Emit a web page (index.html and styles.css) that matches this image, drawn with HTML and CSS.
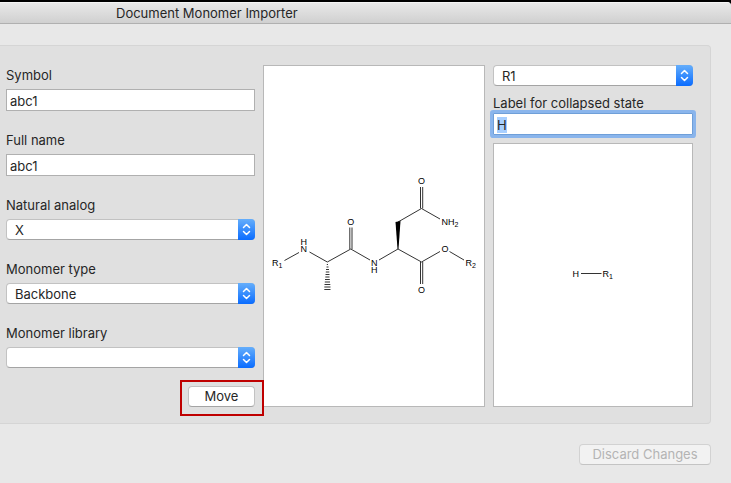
FILE: index.html
```html
<!DOCTYPE html>
<html lang="en">
<head>
<meta charset="utf-8">
<title>Document Monomer Importer</title>
<link rel="stylesheet" href="styles.css">
</head>
<body>
<main class="window">
  <header class="titlebar"><h1>Document Monomer Importer</h1></header>
  <section class="panel">
    <form class="fields">
      <div class="field">
        <label for="symbol">Symbol</label>
        <input id="symbol" class="text" type="text" value="abc1">
      </div>
      <div class="field">
        <label for="fullname">Full name</label>
        <input id="fullname" class="text" type="text" value="abc1">
      </div>
      <div class="field">
        <label for="analog">Natural analog</label>
        <div class="popup">
          <select id="analog"><option>X</option></select>
          <span class="arrows"><svg viewBox="0 0 17 21"><path d="M5.500 8.500 8.500 5.500 11.500 8.500M5.500 12.500 8.500 15.500 11.500 12.500"/></svg></span>
        </div>
      </div>
      <div class="field">
        <label for="type">Monomer type</label>
        <div class="popup">
          <select id="type"><option>Backbone</option></select>
          <span class="arrows"><svg viewBox="0 0 17 21"><path d="M5.500 8.500 8.500 5.500 11.500 8.500M5.500 12.500 8.500 15.500 11.500 12.500"/></svg></span>
        </div>
      </div>
      <div class="field">
        <label for="library">Monomer library</label>
        <div class="popup">
          <select id="library"><option></option></select>
          <span class="arrows"><svg viewBox="0 0 17 21"><path d="M5.500 8.500 8.500 5.500 11.500 8.500M5.500 12.500 8.500 15.500 11.500 12.500"/></svg></span>
        </div>
      </div>
      <div class="highlight"><button type="button" class="button move">Move</button></div>
    </form>

    <div class="canvas">
      <svg class="molecule" viewBox="264 66 220 340">
        <g class="bond">
          <path d="M284.500 260.500 299 252.500M309.500 252 327.300 262 350.800 249 370 260M379 260 398 249 421.500 262 440 251.500M449.500 251.500 464 260"/>
          <path d="M349.800 249V227.500M352 249V227.500M398 222 421.500 208.500 440 219M420.500 208.500V187M422.700 208.500V187M420.500 262V284M422.700 262V284"/>
          <path d="M326.800 264.500H328M326.500 267H328.500M326 269.500H329M325.800 272H329.300M325.500 274.500H329.500M325.300 277H329.500M325 279.500H329.800M324.800 282H330M324.500 284.500H330.300M324.300 287H330.500M324.300 289.500H330.500"/>
        </g>
        <path class="wedge" d="M397.500 249 395.500 222 400.500 221 398.500 249Z"/>
        <g class="atom">
          <text x="272" y="266">R<tspan class="sub" dy="2">1</tspan></text>
          <text x="300.500" y="245">H</text>
          <text x="300.500" y="252">N</text>
          <text x="347.300" y="225">O</text>
          <text x="371" y="266">N</text>
          <text x="371" y="273">H</text>
          <text x="418" y="184">O</text>
          <text x="441.500" y="225">NH<tspan class="sub" dy="2">2</tspan></text>
          <text x="441.500" y="252">O</text>
          <text x="465.500" y="266">R<tspan class="sub" dy="2">2</tspan></text>
          <text x="418" y="293">O</text>
        </g>
      </svg>
    </div>

    <form class="attachment">
      <div class="popup">
        <select aria-label="Attachment point"><option>R1</option></select>
        <span class="arrows"><svg viewBox="0 0 17 21"><path d="M5.500 8.500 8.500 5.500 11.500 8.500M5.500 12.500 8.500 15.500 11.500 12.500"/></svg></span>
      </div>
      <label for="collapsed">Label for collapsed state</label>
      <input id="collapsed" class="text" type="text" value="H">
      <div class="canvas">
        <svg class="molecule" viewBox="494 144 198 262">
          <path class="bond" d="M581 273.500H601.500"/>
          <g class="atom">
            <text x="572.500" y="277">H</text>
            <text x="602.500" y="277">R<tspan class="sub" dy="2">1</tspan></text>
          </g>
        </svg>
      </div>
    </form>
  </section>
  <footer class="footer"><button type="button" class="button discard" disabled>Discard Changes</button></footer>
</main>
<script src="script.js"></script>
</body>
</html>
```
FILE: styles.css
```css
* { box-sizing: border-box; }
html { background: #000; }
body {
  margin: 0;
  padding-top: 2px;
  min-height: 100vh;
  display: flex;
  color: #262626;
  font: 13px/20px Inter, "Liberation Sans", sans-serif;
}
.window {
  flex: 1;
  display: flex;
  flex-direction: column;
  background: #e8e8e8;
  border-radius: 0 4px 0 0;
  overflow: hidden;
}
.titlebar {
  height: 22px;
  padding-left: 116px;
  background: linear-gradient(#e8e8e8, #d0d0d0);
  border-top: 1px solid #f4f4f4;
  border-bottom: 1px solid #b0b0b0;
}
.titlebar h1 { margin: 0; font-size: 13px; font-weight: 400; line-height: 20px; }
.panel {
  display: grid;
  grid-template-columns: 249fr 222fr 200fr;
  gap: 8px;
  margin: 21px 20px 0 0;
  padding: 19px 17px 16px 6px;
  background: #e0e0e0;
  border: 1px solid #d5d5d5;
  border-left: 0;
  border-radius: 0 4px 4px 0;
}
.fields { display: flex; flex-direction: column; min-width: 0; }
.field { display: flex; flex-direction: column; gap: 4px; }
.field + .field { margin-top: 19px; }
.text {
  width: 100%;
  height: 22px;
  padding: 2px 3px 0;
  border: 1px solid #b0b0b0;
  border-radius: 0;
  background: #fff;
  color: #262626;
  font: inherit;
  outline: 0;
}
.text:focus { border-color: #6f9fd8; box-shadow: 0 0 0 3px #8ab5ec; border-radius: 1px; }
.text::selection { background: #a8cfff; color: #262626; }
.popup { display: flex; position: relative; height: 21px; }
.popup select {
  appearance: none;
  width: 100%;
  height: 21px;
  padding: 0 26px 0 8px;
  border: 1px solid #c2c2c2;
  border-bottom-color: #a4a4a4;
  border-radius: 4px;
  background: #fff;
  color: #262626;
  font: inherit;
}
.arrows {
  position: absolute;
  top: 0;
  right: 0;
  width: 17px;
  height: 21px;
  border-radius: 0 4px 4px 0;
  background: linear-gradient(#65aefb, #0a6cff);
  pointer-events: none;
}
.arrows svg { display: block; fill: none; stroke: #fff; stroke-width: 1.500; stroke-linecap: round; stroke-linejoin: round; }
.highlight { position: relative; align-self: flex-end; display: flex; margin-top: 18px; }
.highlight::after {
  content: "";
  position: absolute;
  inset: -6px -9px -9px -8px;
  border: 2px solid #bf0000;
  pointer-events: none;
}
.button {
  height: 21px;
  padding: 0 12px;
  border: 1px solid #c2c2c2;
  border-bottom-color: #a4a4a4;
  border-radius: 4px;
  background: #fff;
  color: #262626;
  font: inherit;
  line-height: 19px;
}
.move { min-width: 67px; }
.discard { min-width: 132px; background: #f2f2f2; border-color: #d2d2d2; border-bottom-color: #c4c4c4; color: #b4b4b4; }
.canvas { display: flex; background: #fff; border: 1px solid #b8b8b8; min-width: 0; }
.molecule { width: 100%; height: 100%; }
.bond { fill: none; stroke: #333; stroke-width: 1; }
.wedge { fill: #000; }
.atom { fill: #000; font: 9px "Liberation Sans", sans-serif; }
.sub { font-size: 7px; }
.attachment { display: flex; flex-direction: column; min-width: 0; }
.attachment label { margin-top: 7px; }
.attachment .canvas { flex: 1; margin-top: 8px; }
.footer { display: flex; justify-content: flex-end; padding: 20px 20px 18px 0; }
```
FILE: script.js
```js
const collapsed = document.getElementById("collapsed");
collapsed.focus();
collapsed.select();
```
